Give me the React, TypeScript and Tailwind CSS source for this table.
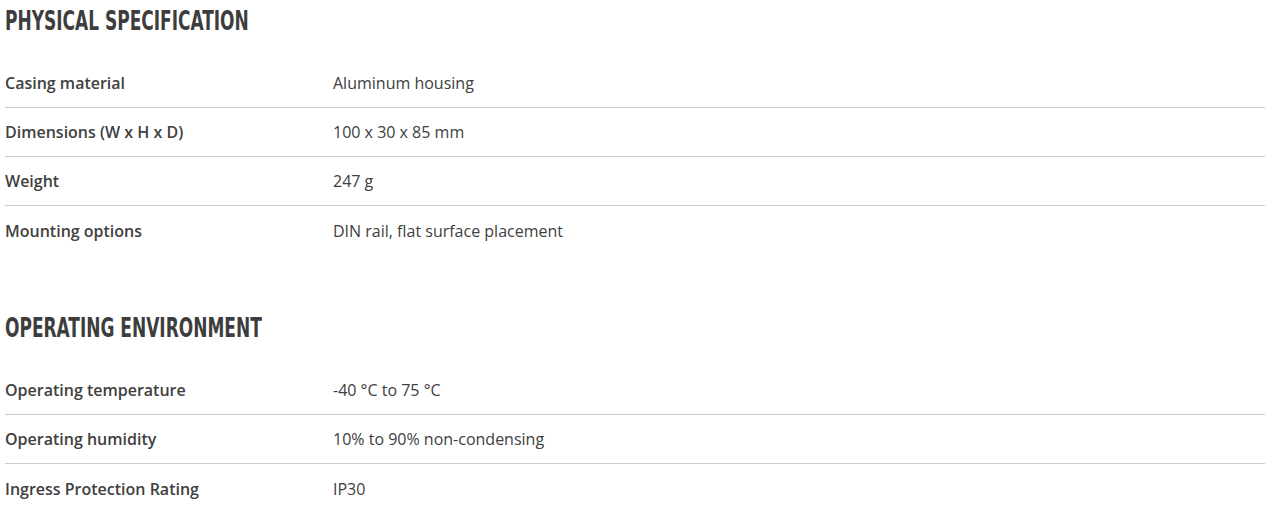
const sections = [
  {
    title: "PHYSICAL SPECIFICATION",
    rows: [
      ["Casing material", "Aluminum housing"],
      ["Dimensions (W x H x D)", "100 x 30 x 85 mm"],
      ["Weight", "247 g"],
      ["Mounting options", "DIN rail, flat surface placement"],
    ],
  },
  {
    title: "OPERATING ENVIRONMENT",
    rows: [
      ["Operating temperature", "-40 °C to 75 °C"],
      ["Operating humidity", "10% to 90% non-condensing"],
      ["Ingress Protection Rating", "IP30"],
    ],
  },
];

const SpecSection = ({ title, rows }: { title: string; rows: string[][] }) => {
  return (
    <section className="mb-[52px]">
      <h2 className="h-[59px] pt-[4px] text-[27px] leading-[34px] font-bold text-[#3d3d3d] [font-family:'DejaVu_Sans_Condensed',sans-serif]">
        <span className="inline-block origin-left scale-x-[0.7] whitespace-nowrap">{title}</span>
      </h2>
      <div>
        {rows.map(([label, value], i) => (
          <div
            key={label}
            className={`flex h-[49px] items-center ${i < rows.length - 1 ? "border-b border-[#cccccc]" : ""}`}
          >
            <div className="w-[328px] shrink-0 font-semibold">{label}</div>
            <div>{value}</div>
          </div>
        ))}
      </div>
    </section>
  );
};

export default function App() {
  return (
    <div className="bg-white pl-[5px] pr-[10px] text-[16px] text-[#404040] [font-family:'Open_Sans',sans-serif]">
      {sections.map((s) => (
        <SpecSection key={s.title} title={s.title} rows={s.rows} />
      ))}
    </div>
  );
}
